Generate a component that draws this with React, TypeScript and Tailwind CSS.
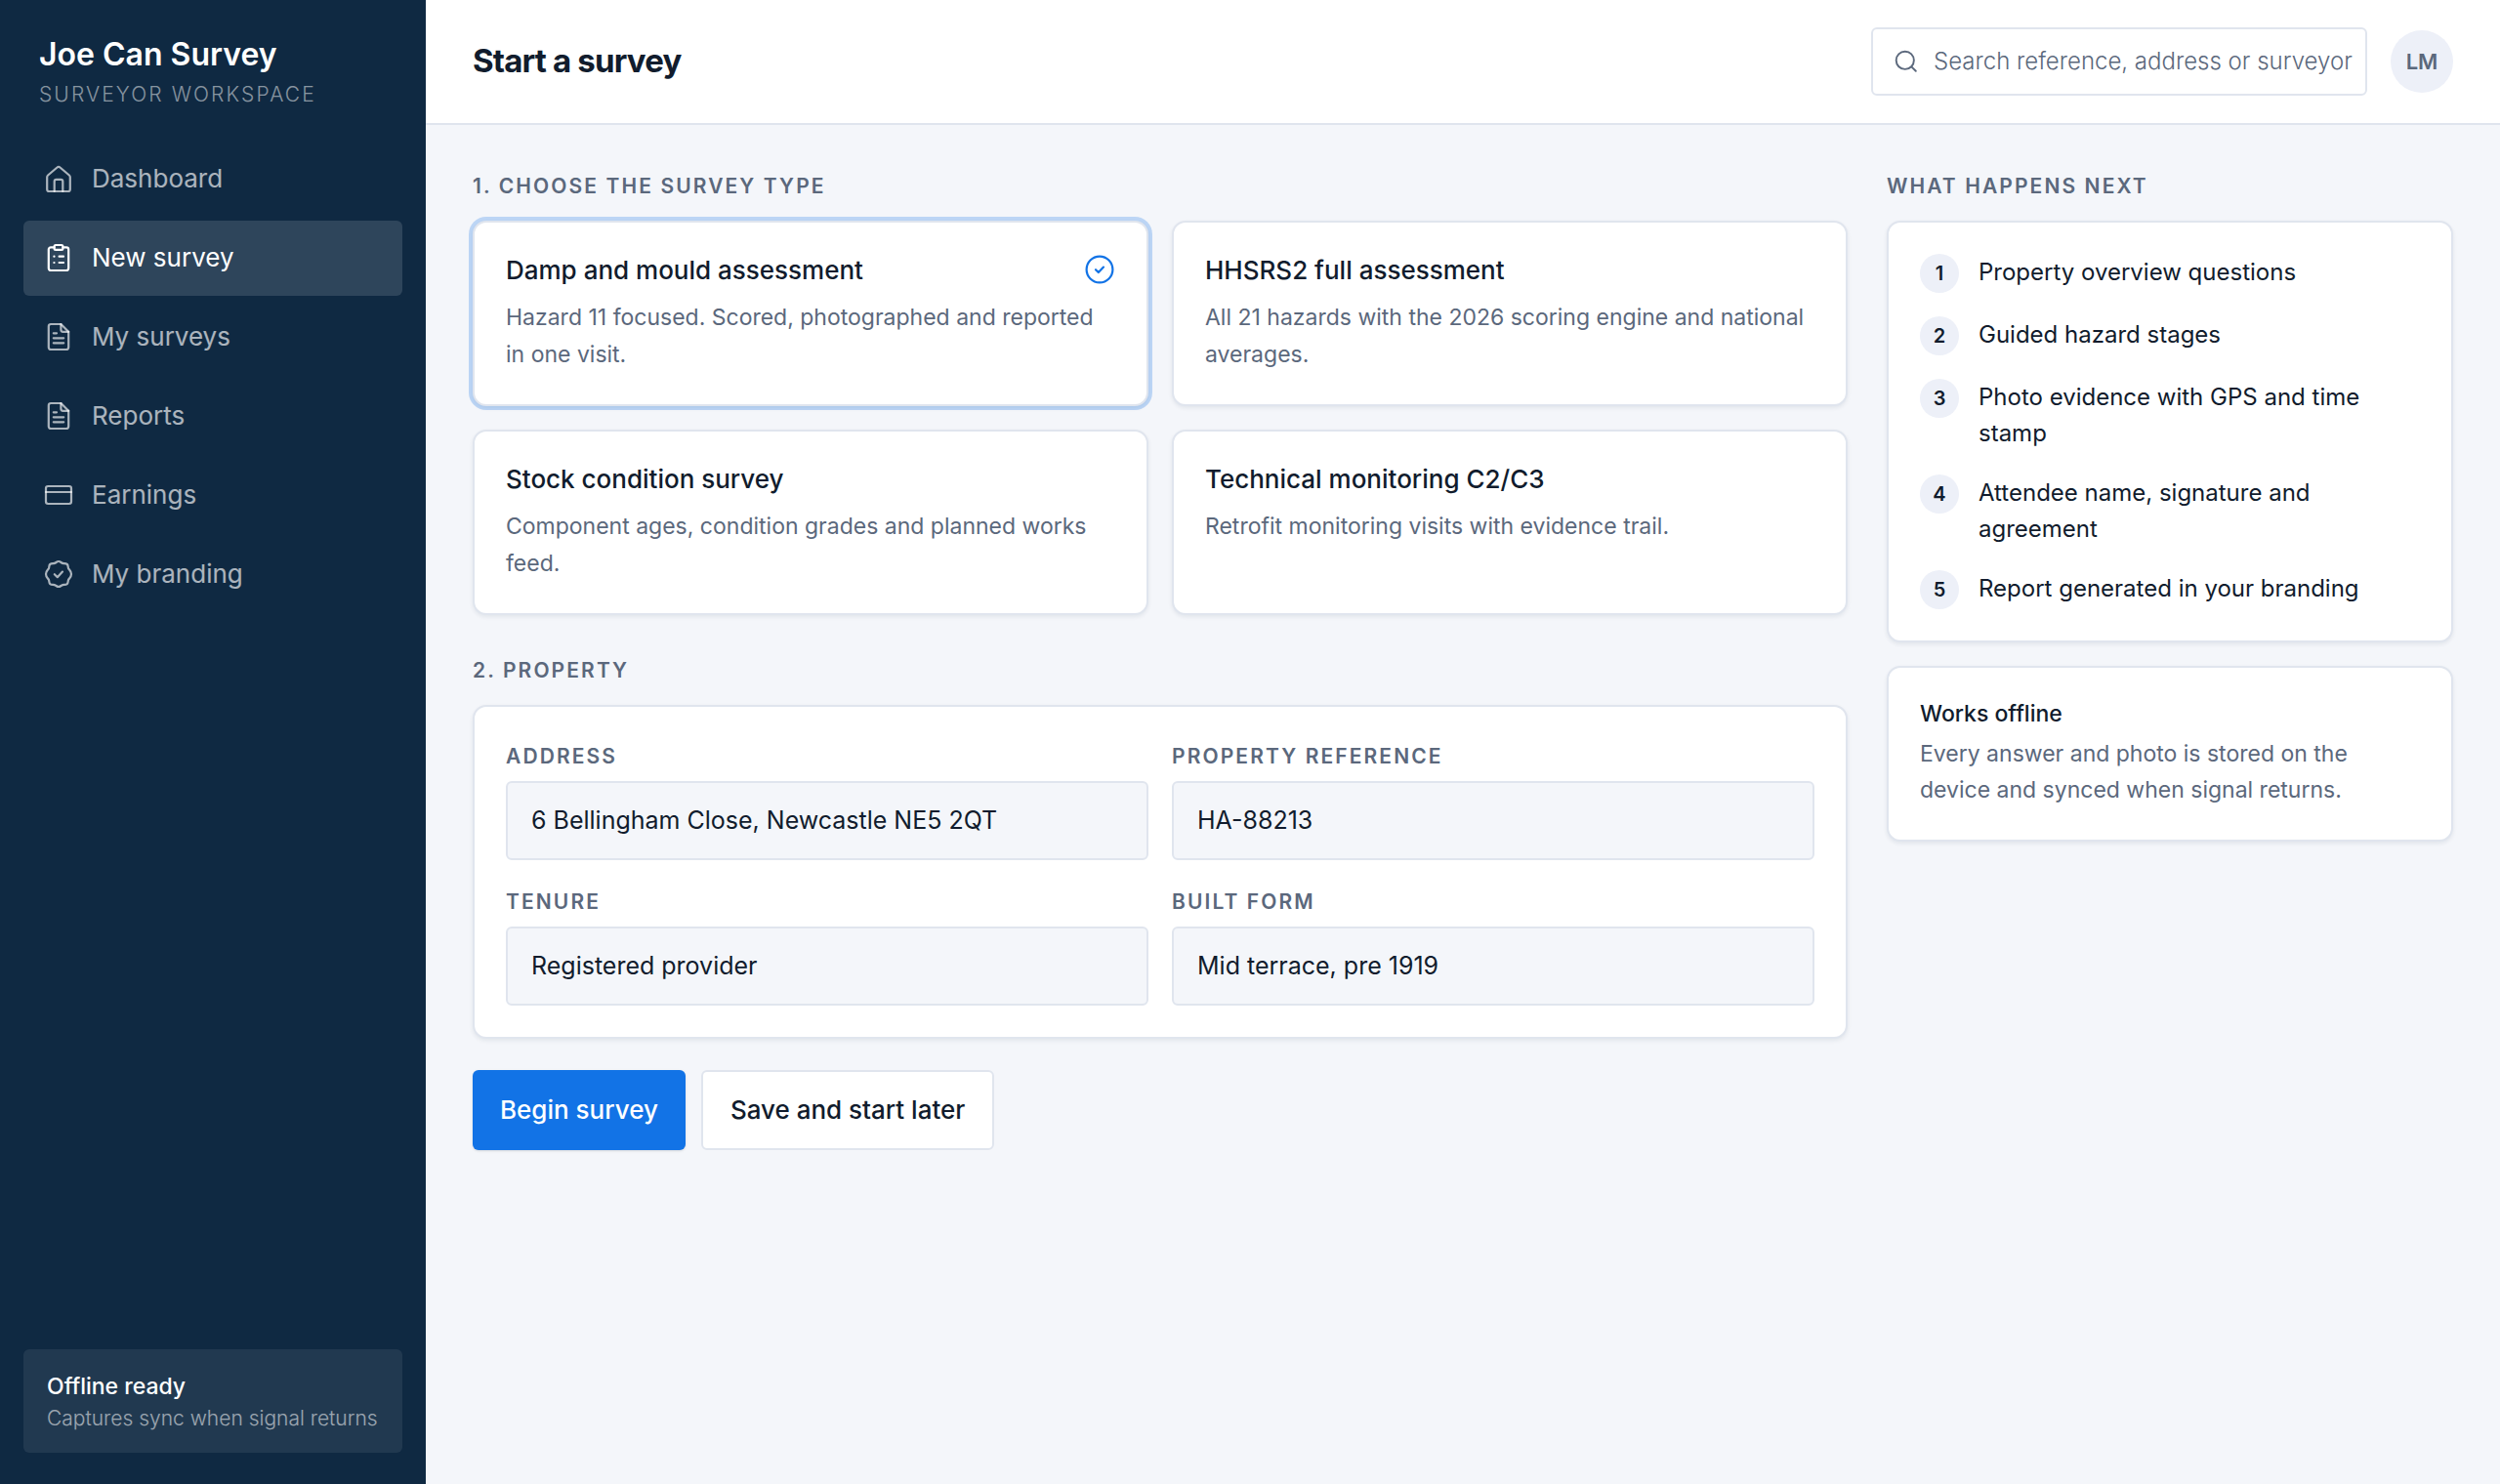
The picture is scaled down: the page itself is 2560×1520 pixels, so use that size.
import type { ReactNode } from 'react';

type IconProps = { className?: string; children?: ReactNode };

function Icon({ className = 'size-8', children }: IconProps) {
  return (
    <svg
      viewBox="0 0 32 32"
      fill="none"
      stroke="currentColor"
      strokeWidth="2.2"
      strokeLinecap="round"
      strokeLinejoin="round"
      className={`shrink-0 ${className}`}
      aria-hidden="true"
    >
      {children}
    </svg>
  );
}

function HomeIcon() {
  return (
    <Icon>
      <path d="M4.2 14.4c0-.8.3-1.4.9-1.9l9.4-8a2.2 2.2 0 0 1 3 0l9.4 8c.6.5.9 1.1.9 1.9V27a2 2 0 0 1-2 2H6.2a2 2 0 0 1-2-2Z" />
      <path d="M11.7 29V18.800a2 2 0 0 1 2-2h4.600a2 2 0 0 1 2 2V29" />
    </Icon>
  );
}

function ClipboardIcon() {
  return (
    <Icon>
      <path d="M11.6 5.4H8a2.2 2.2 0 0 0-2.2 2.2v19.2A2.2 2.2 0 0 0 8 29h16a2.2 2.2 0 0 0 2.2-2.2V7.6A2.2 2.2 0 0 0 24 5.4h-3.6" />
      <rect x="11.6" y="3" width="8.8" height="4.8" rx="1.4" />
      <path d="M11.4 14.7h.1M11.4 21h.1M16.6 14.7h4.4M16.6 21h4.4" />
    </Icon>
  );
}

function FileIcon() {
  return (
    <Icon>
      <path d="M18.4 3H8a2.2 2.2 0 0 0-2.2 2.2v21.6A2.2 2.2 0 0 0 8 29h16a2.2 2.2 0 0 0 2.2-2.2v-16Z" />
      <path d="M18.4 3v5.8a2 2 0 0 0 2 2h5.8" />
      <path d="M10.8 12.3H14M10.8 17.3h10.4M10.8 22.3h10.4" />
    </Icon>
  );
}

function CardIcon() {
  return (
    <Icon>
      <rect x="3" y="7" width="26" height="18" rx="2.2" />
      <path d="M3 13h26" />
    </Icon>
  );
}

function BadgeIcon() {
  return (
    <Icon>
      <path d="M16 3c1.9 0 2.6 1.5 4.2 1.9s3-.3 4.5 1c1.4 1.4.7 2.900 1.400 4.300.8 1.500 2.900 2.500 2.900 5.800s-2.100 4.300-2.900 5.800c-.7 1.400 0 2.900-1.400 4.300-1.500 1.300-2.900.6-4.500 1S17.900 29 16 29s-2.600-1.500-4.200-1.900-3 .3-4.500-1c-1.400-1.400-.7-2.900-1.400-4.300C5.100 20.300 3 19.300 3 16s2.100-4.300 2.900-5.800c.7-1.400 0-2.900 1.400-4.300 1.500-1.300 2.900-.6 4.500-1S14.100 3 16 3Z" />
      <path d="m11.8 16.2 3 3 5.2-5.6" />
    </Icon>
  );
}

function CheckCircleIcon() {
  return (
    <Icon className="size-8 text-[#1273e6]">
      <circle cx="16" cy="16" r="13.4" />
      <path d="m12 16.2 2.8 2.8 5.2-5.4" />
    </Icon>
  );
}

function SearchIcon() {
  return (
    <Icon className="size-7 text-[#5b687c]">
      <circle cx="14.6" cy="14.6" r="10.4" />
      <path d="m22.4 22.4 4.8 4.8" />
    </Icon>
  );
}

const NAV = [
  { label: 'Dashboard', icon: HomeIcon },
  { label: 'New survey', icon: ClipboardIcon, active: true },
  { label: 'My surveys', icon: FileIcon },
  { label: 'Reports', icon: FileIcon },
  { label: 'Earnings', icon: CardIcon },
  { label: 'My branding', icon: BadgeIcon },
];

const SURVEY_TYPES = [
  {
    title: 'Damp and mould assessment',
    text: 'Hazard 11 focused. Scored, photographed and reported in one visit.',
    selected: true,
  },
  {
    title: 'HHSRS2 full assessment',
    text: 'All 21 hazards with the 2026 scoring engine and national averages.',
  },
  {
    title: 'Stock condition survey',
    text: 'Component ages, condition grades and planned works feed.',
  },
  {
    title: 'Technical monitoring C2/C3',
    text: 'Retrofit monitoring visits with evidence trail.',
  },
];

const FIELDS = [
  { id: 'address', label: 'Address', value: '6 Bellingham Close, Newcastle NE5 2QT' },
  { id: 'reference', label: 'Property reference', value: 'HA-88213' },
  { id: 'tenure', label: 'Tenure', value: 'Registered provider' },
  { id: 'built-form', label: 'Built form', value: 'Mid terrace, pre 1919' },
];

const STEPS = [
  'Property overview questions',
  'Guided hazard stages',
  'Photo evidence with GPS and time stamp',
  'Attendee name, signature and agreement',
  'Report generated in your branding',
];

const CARD = 'rounded-[14px] border-2 border-[#e0e5ee] bg-white shadow-[0_2px_4px_rgba(15,41,66,0.08)]';
const LABEL = 'text-[21px] font-semibold tracking-widest text-[#5b687c] uppercase';

function Sidebar() {
  return (
    <aside className="flex w-[436px] shrink-0 flex-col bg-[#0f2942] px-6 pt-9 pb-8">
      <div className="px-4">
        <p className="text-[32px] leading-10 font-semibold text-white">Joe Can Survey</p>
        <p className="mt-1 text-[21px] leading-[34px] font-light tracking-widest text-white/50 uppercase">Surveyor workspace</p>
      </div>
      <nav className="mt-[31px] flex flex-col gap-1" aria-label="Main">
        {NAV.map(({ label, icon: NavIcon, active }) => (
          <a
            key={label}
            href="#"
            aria-current={active ? 'page' : undefined}
            className={`flex h-[77px] items-center gap-[18px] rounded-md px-5 pb-0.5 text-[26px] ${active ? 'bg-white/13 text-white' : 'text-white/65'}`}
          >
            <NavIcon />
            {label}
          </a>
        ))}
      </nav>
      <div className="mt-auto rounded-md bg-white/8 px-6 py-5">
        <p className="text-[23px] leading-9 font-medium text-white">Offline ready</p>
        <p className="text-[21px] leading-[30px] font-light whitespace-nowrap text-white/55">Captures sync when signal returns</p>
      </div>
    </aside>
  );
}

function Header() {
  return (
    <header className="flex h-32 items-center justify-between border-b-2 border-[#e0e5ee] bg-white px-12">
      <h1 className="text-[33px] font-bold tracking-tight">Start a survey</h1>
      <div className="flex items-center gap-6">
        <label className="flex h-[70px] w-[508px] items-center gap-3.5 rounded-md border-2 border-[#e0e5ee] pr-3 pl-5">
          <SearchIcon />
          <input
            type="text"
            aria-label="Search"
            placeholder="Search reference, address or surveyor"
            className="min-w-0 flex-1 text-[24px] font-light outline-none placeholder:text-[#5b687c]"
          />
        </label>
        <button type="button" aria-label="Account LM" className="size-16 rounded-full bg-[#edf0f8] text-[22px] font-semibold text-[#5b687c]">
          LM
        </button>
      </div>
    </header>
  );
}

function SurveyTypes() {
  return (
    <section>
      <h2 className={`leading-[30px] ${LABEL}`}>1. Choose the survey type</h2>
      <div className="mt-5 grid grid-cols-2 gap-6">
        {SURVEY_TYPES.map(({ title, text, selected }) => (
          <button
            key={title}
            type="button"
            aria-pressed={Boolean(selected)}
            className={`flex flex-col p-8 text-left ${CARD} ${selected ? 'ring-4 ring-[#1273e6]/25' : ''}`}
          >
            <span className="flex w-full items-start justify-between">
              <span className="text-[26px] leading-[34px] font-medium">{title}</span>
              {selected ? <CheckCircleIcon /> : null}
            </span>
            <span className="mt-3 text-[23px] leading-[38px] text-[#5b687c]">{text}</span>
          </button>
        ))}
      </div>
    </section>
  );
}

function PropertyForm() {
  return (
    <section className="mt-[42px]">
      <h2 className={`leading-[30px] ${LABEL}`}>2. Property</h2>
      <div className={`mt-5 grid grid-cols-2 gap-6 p-8 ${CARD}`}>
        {FIELDS.map(({ id, label, value }) => (
          <div key={id} className="flex flex-col gap-1.5">
            <label htmlFor={id} className={`leading-[38px] ${LABEL}`}>{label}</label>
            <input
              id={id}
              defaultValue={value}
              className="h-[81px] rounded-md border-2 border-[#e0e5ee] bg-[#f4f6fa] px-6 pb-0.5 text-[25px]"
            />
          </div>
        ))}
      </div>
      <div className="mt-8 flex gap-4">
        <button type="button" className="h-[82px] rounded-md bg-[#1273e6] px-7 pb-0.5 text-[26px] font-medium text-white shadow-sm">
          Begin survey
        </button>
        <button type="button" className="h-[82px] rounded-md border-2 border-[#e0e5ee] bg-white px-7 pb-0.5 text-[26px] font-medium">
          Save and start later
        </button>
      </div>
    </section>
  );
}

function NextSteps() {
  return (
    <aside className="w-[580px] shrink-0">
      <h2 className={`leading-[30px] ${LABEL}`}>What happens next</h2>
      <ol className={`mt-5 flex flex-col gap-6 p-8 ${CARD}`}>
        {STEPS.map((step, i) => (
          <li key={step} className="flex items-start gap-5 text-[24px] leading-[37px]">
            <span className="flex size-10 shrink-0 items-center justify-center rounded-full bg-[#edf0f8] text-[20px] font-semibold">
              {i + 1}
            </span>
            <span>{step}</span>
          </li>
        ))}
      </ol>
      <div className={`mt-6 p-8 ${CARD}`}>
        <h3 className="text-[23px] leading-[30px] font-medium">Works offline</h3>
        <p className="mt-2 text-[23px] leading-[37px] text-[#5b687c]">
          Every answer and photo is stored on the device and synced when signal returns.
        </p>
      </div>
    </aside>
  );
}

export default function App() {
  return (
    <div className="flex min-h-screen bg-[#f4f6fa] font-[Inter,sans-serif] text-[#111c2d]">
      <Sidebar />
      <div className="min-w-0 flex-1">
        <Header />
        <main className="flex items-start gap-10 px-12 py-12">
          <div className="min-w-0 flex-1">
            <SurveyTypes />
            <PropertyForm />
          </div>
          <NextSteps />
        </main>
      </div>
    </div>
  );
}
